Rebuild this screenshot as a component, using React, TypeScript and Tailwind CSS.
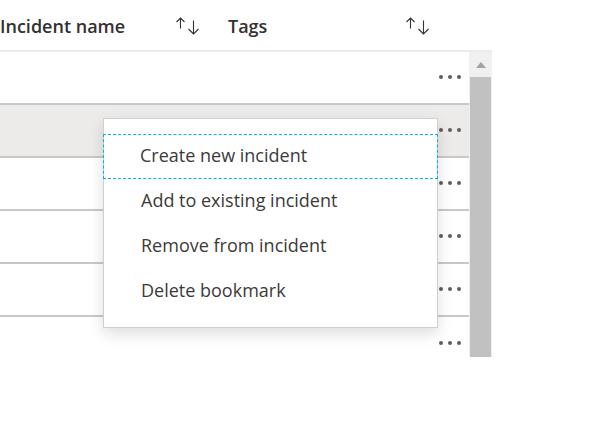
import React from "react";

const menuItems = [
  "Create new incident",
  "Add to existing incident",
  "Remove from incident",
  "Delete bookmark",
];

function SortIcon() {
  return (
    <svg width="26" height="20" viewBox="0 0 26 20" className="text-[#323130]">
      <path
        d="M4.5 11.5V1M0.5 5L4.5 1L8.5 5"
        fill="none"
        stroke="currentColor"
        strokeWidth="1.1"
      />
      <path
        d="M17.5 3.5V17M12.5 12L17.5 17L22.5 12"
        fill="none"
        stroke="currentColor"
        strokeWidth="1.1"
      />
    </svg>
  );
}

function Dots() {
  return (
    <div className="flex gap-[5px] pr-[8px]">
      <span className="w-[4px] h-[4px] rounded-full bg-[#605e5c]" />
      <span className="w-[4px] h-[4px] rounded-full bg-[#605e5c]" />
      <span className="w-[4px] h-[4px] rounded-full bg-[#605e5c]" />
    </div>
  );
}

export default function App() {
  const rows = [0, 1, 2, 3, 4, 5];

  return (
    <div className="relative w-[591px] h-[424px] bg-white overflow-hidden font-['Open_Sans',sans-serif] text-[#323130]">
      {/* header */}
      <div className="flex items-center h-[52px] w-[492px] border-b-2 border-[#edebe9]">
        <div className="w-[176px] pt-[2px] text-[18px] font-semibold leading-none">
          Incident name
        </div>
        <div className="w-[52px] pt-[4px]">
          <SortIcon />
        </div>
        <div className="w-[178px] pt-[2px] text-[18px] font-semibold leading-none">
          Tags
        </div>
        <div className="pt-[4px]">
          <SortIcon />
        </div>
      </div>

      {/* body */}
      <div className="flex h-[305px]">
        <div className="w-[469px] flex flex-col">
          {rows.map((r) => (
            <div
              key={r}
              className={
                "h-[53px] shrink-0 flex items-center justify-end pb-[2px] " +
                (r < 5 ? "border-b-2 border-[#c8c8c8] " : "") +
                (r === 1 ? "bg-[#edebe9]" : "")
              }
            >
              <Dots />
            </div>
          ))}
        </div>
        <div className="w-[23px] bg-[#f0f0f0] flex flex-col items-center">
          <div className="h-[25px] flex items-center justify-center">
            <svg width="10" height="6" viewBox="0 0 10 6">
              <path d="M0 6L5 0L10 6Z" fill="#a3a3a3" />
            </svg>
          </div>
          <div className="w-[21px] flex-1 bg-[#c1c1c1]" />
        </div>
      </div>

      {/* context menu */}
      <div className="absolute left-[103px] top-[118px] w-[335px] h-[210px] bg-white border border-[#d2d0ce] shadow-[0_6px_14px_rgba(0,0,0,0.13)] pt-[15px]">
        {menuItems.map((item, i) => (
          <div
            key={item}
            className={
              "h-[45px] flex items-center pl-[36px] pb-[3px] text-[18px] text-[#3b3a39] " +
              (i === 0
                ? "border border-dashed border-[#00b4e6] -mx-px"
                : "border border-transparent")
            }
          >
            {item}
          </div>
        ))}
      </div>
    </div>
  );
}
